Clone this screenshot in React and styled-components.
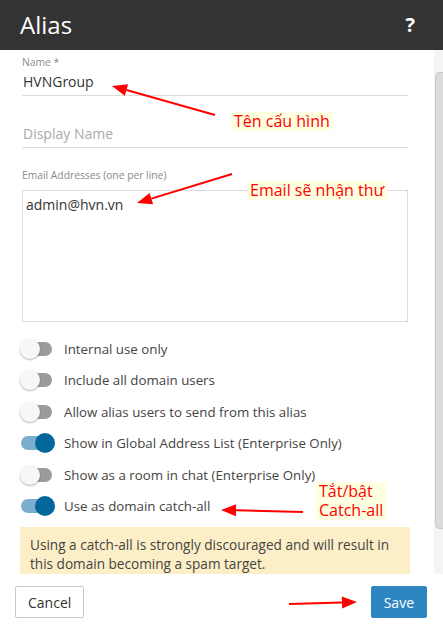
import styled, { createGlobalStyle } from "styled-components";

const GlobalStyle = createGlobalStyle`
  html, body {
    margin: 0;
    padding: 0;
    background: #fff;
  }
  * {
    box-sizing: border-box;
  }
`;

const Dialog = styled.div`
  position: relative;
  width: 443px;
  height: 633px;
  display: flex;
  flex-direction: column;
  background: #fff;
  font-family: "Open Sans", "Noto Sans", sans-serif;
  color: #333;
  overflow: hidden;
`;

const Header = styled.header`
  height: 50px;
  flex: none;
  display: flex;
  align-items: center;
  justify-content: space-between;
  padding: 0 28px 0 20px;
  background: #333;
  color: #fff;
`;

const Title = styled.h1`
  margin: 0;
  font-size: 24px;
  font-weight: 400;
  line-height: 30px;
`;

const Help = styled.span`
  font-size: 20px;
  font-weight: 700;
  line-height: 24px;
`;

const Main = styled.div`
  flex: 1;
  min-height: 0;
  display: flex;
`;

const Content = styled.div`
  flex: 1;
  overflow: hidden;
  padding: 6px 24px 0 20px;
`;

const ScrollTrack = styled.div`
  width: 9px;
  flex: none;
  background: #f4f4f4;
  padding: 22px 0 0 1px;
`;

const ScrollThumb = styled.div`
  height: 457px;
  background: #dcdcdc;
  border: 1px solid #c8c8c8;
  border-right: none;
  border-radius: 5px 0 0 5px;
`;

const Field = styled.div`
  margin: 0 2px 12px;
`;

const Label = styled.div`
  height: 12px;
  font-size: 10.3px;
  line-height: 12px;
  color: #8a8a8a;
`;

const Value = styled.div`
  padding: 4px 1px 4px;
  font-size: 14px;
  line-height: 19px;
  color: ${(p) => (p.$placeholder ? "#a9a9a9" : "#333")};
  border-bottom: 1px solid #dcdcdc;
`;

const AreaLabel = styled(Label)`
  margin: 21px 2px 0;
`;

const TextArea = styled.div`
  height: 132px;
  margin: 9px 2px 0;
  padding: 4px 3px;
  border: 1px solid #dcdcdc;
  font-size: 14px;
  line-height: 19px;
`;

const Switches = styled.div`
  margin-top: 11px;
`;

const SwitchRow = styled.label`
  height: 31.5px;
  display: flex;
  align-items: center;
  gap: 9px;
  font-size: 13.3px;
  color: #444;
`;

const Track = styled.span`
  position: relative;
  width: 35px;
  height: 20px;
  flex: none;

  &::before {
    content: "";
    position: absolute;
    left: 1px;
    right: 3px;
    top: 3px;
    height: 14px;
    border-radius: 7px;
    background: ${(p) => (p.$on ? "#7aaecb" : "#9b9b9b")};
  }
`;

const Knob = styled.span`
  position: absolute;
  top: 0;
  left: ${(p) => (p.$on ? "15px" : "0")};
  width: 20px;
  height: 20px;
  border-radius: 50%;
  background: ${(p) => (p.$on ? "#03679b" : "#f7f7f7")};
  box-shadow: ${(p) => (p.$on ? "none" : "0 1px 2px rgba(0,0,0,0.3)")};
`;

const Warning = styled.div`
  margin-top: 5px;
  padding: 8px 10px;
  background: #fcefc7;
  font-size: 13.6px;
  line-height: 19px;
  color: #444;
`;

const Footer = styled.footer`
  height: 59px;
  flex: none;
  display: flex;
  align-items: flex-start;
  justify-content: space-between;
  padding: 12px 16px 0 15px;
`;

const Button = styled.button`
  height: 32px;
  padding: 0 12px;
  font-family: inherit;
  font-size: 14px;
  border-radius: 2px;
  border: 1px solid ${(p) => (p.$primary ? "#2e86c1" : "#c8c8c8")};
  background: ${(p) => (p.$primary ? "#2e86c1" : "#fff")};
  color: ${(p) => (p.$primary ? "#fff" : "#333")};
`;

/* callouts drawn on top of the form */
const Overlay = styled.svg`
  position: absolute;
  inset: 0;
  pointer-events: none;
`;

const Note = styled.div`
  position: absolute;
  left: ${(p) => p.$x}px;
  top: ${(p) => p.$y}px;
  padding: 0 3px;
  background: #ffffe1;
  color: #f00;
  font-size: 16px;
  line-height: 19px;
  white-space: pre;
`;

const Arrow = ({ from, to }) => {
  const [x1, y1] = from;
  const [x2, y2] = to;
  const len = Math.hypot(x2 - x1, y2 - y1);
  const ux = (x2 - x1) / len;
  const uy = (y2 - y1) / len;
  const bx = x2 - ux * 15;
  const by = y2 - uy * 15;
  const head = [
    [x2, y2],
    [bx - uy * 6, by + ux * 6],
    [bx + uy * 6, by - ux * 6],
  ]
    .map((pt) => pt.join(","))
    .join(" ");
  return (
    <g>
      <line x1={x1} y1={y1} x2={bx} y2={by} stroke="#f00" strokeWidth="2" />
      <polygon points={head} fill="#f00" />
    </g>
  );
};

const Switch = ({ on, children }) => (
  <SwitchRow>
    <Track $on={on}>
      <Knob $on={on} />
    </Track>
    {children}
  </SwitchRow>
);

const options = [
  { label: "Internal use only", on: false },
  { label: "Include all domain users", on: false },
  { label: "Allow alias users to send from this alias", on: false },
  { label: "Show in Global Address List (Enterprise Only)", on: true },
  { label: "Show as a room in chat (Enterprise Only)", on: false },
  { label: "Use as domain catch-all", on: true },
];

const App = () => {
  return (
    <Dialog>
      <GlobalStyle />
      <Header>
        <Title>Alias</Title>
        <Help>?</Help>
      </Header>
      <Main>
        <Content>
          <Field>
            <Label>Name *</Label>
            <Value>HVNGroup</Value>
          </Field>
          <Field>
            <Label />
            <Value $placeholder>Display Name</Value>
          </Field>
          <AreaLabel>Email Addresses (one per line)</AreaLabel>
          <TextArea>admin@hvn.vn</TextArea>
          <Switches>
            {options.map((o) => (
              <Switch key={o.label} on={o.on}>
                {o.label}
              </Switch>
            ))}
          </Switches>
          <Warning>
            Using a catch-all is strongly discouraged and will result in this
            domain becoming a spam target.
          </Warning>
        </Content>
        <ScrollTrack>
          <ScrollThumb />
        </ScrollTrack>
      </Main>
      <Footer>
        <Button>Cancel</Button>
        <Button $primary>Save</Button>
      </Footer>

      <Overlay width="443" height="633">
        <Arrow from={[215, 115]} to={[112, 86]} />
        <Arrow from={[232, 174]} to={[137, 203]} />
        <Arrow from={[303, 512]} to={[221, 510]} />
        <Arrow from={[289, 604]} to={[357, 602]} />
      </Overlay>
      <Note $x={231} $y={112}>Tên cấu hình</Note>
      <Note $x={247} $y={181}>Email sẽ nhận thư</Note>
      <Note $x={316} $y={482}>{"Tắt/bật\nCatch-all"}</Note>
    </Dialog>
  );
};

export default App;
